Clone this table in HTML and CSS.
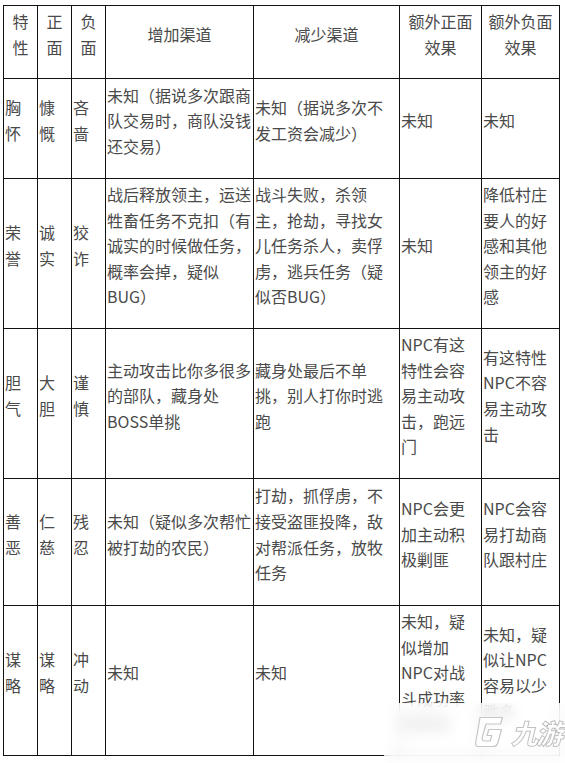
FILE: index.html
```html
<!DOCTYPE html>
<html lang="zh-CN">
<head>
<meta charset="utf-8">
<title>特性表</title>
<link rel="stylesheet" href="styles.css">
</head>
<body>
<div class="page">
  <div class="sheet">
    <div class="cell head">特<br>性</div>
    <div class="cell head">正<br>面</div>
    <div class="cell head">负<br>面</div>
    <div class="cell head">增加渠道</div>
    <div class="cell head">减少渠道</div>
    <div class="cell head">额外正面<br>效果</div>
    <div class="cell head">额外负面<br>效果</div>

    <div class="cell">胸<br>怀</div>
    <div class="cell">慷<br>慨</div>
    <div class="cell">吝<br>啬</div>
    <div class="cell">未知（据说多次跟商<br>队交易时，商队没钱<br>还交易）</div>
    <div class="cell">未知（据说多次不<br>发工资会减少）</div>
    <div class="cell">未知</div>
    <div class="cell">未知</div>

    <div class="cell">荣<br>誉</div>
    <div class="cell">诚<br>实</div>
    <div class="cell">狡<br>诈</div>
    <div class="cell">战后释放领主，运送<br>牲畜任务不克扣（有<br>诚实的时候做任务，<br>概率会掉，疑似<br>BUG）</div>
    <div class="cell">战斗失败，杀领<br>主，抢劫，寻找女<br>儿任务杀人，卖俘<br>虏，逃兵任务（疑<br>似否BUG）</div>
    <div class="cell">未知</div>
    <div class="cell">降低村庄<br>要人的好<br>感和其他<br>领主的好<br>感</div>

    <div class="cell">胆<br>气</div>
    <div class="cell">大<br>胆</div>
    <div class="cell">谨<br>慎</div>
    <div class="cell">主动攻击比你多很多<br>的部队，藏身处<br>BOSS单挑</div>
    <div class="cell">藏身处最后不单<br>挑，别人打你时逃<br>跑</div>
    <div class="cell">NPC有这<br>特性会容<br>易主动攻<br>击，跑远<br>门</div>
    <div class="cell">有这特性<br>NPC不容<br>易主动攻<br>击</div>

    <div class="cell">善<br>恶</div>
    <div class="cell">仁<br>慈</div>
    <div class="cell">残<br>忍</div>
    <div class="cell">未知（疑似多次帮忙<br>被打劫的农民）</div>
    <div class="cell">打劫，抓俘虏，不<br>接受盗匪投降，敌<br>对帮派任务，放牧<br>任务</div>
    <div class="cell">NPC会更<br>加主动积<br>极剿匪</div>
    <div class="cell">NPC会容<br>易打劫商<br>队跟村庄</div>

    <div class="cell">谋<br>略</div>
    <div class="cell">谋<br>略</div>
    <div class="cell">冲<br>动</div>
    <div class="cell">未知</div>
    <div class="cell">未知</div>
    <div class="cell">未知，疑<br>似增加<br>NPC对战<br>斗成功率<br>的影响</div>
    <div class="cell">未知，疑<br>似让NPC<br>容易以少<br>胜多</div>
  </div>

  <div class="watermark">
    <svg class="wm-logo" width="30" height="32" viewBox="0 0 30 32">
      <path d="M6 1.5 L28.5 1.5 L26.5 8 L12 8 L8.2 21.5 Q7.4 25 10.8 25 L16.2 25 L17.8 19.5 L13 19.5 L14.8 13.5 L27.5 13.5 L23.8 27 Q22.8 30.5 19 30.5 L5 30.5 Q0.6 30.5 1.8 26 Z" fill="#fff" stroke="#c6c6c6" stroke-width="1.2" stroke-linejoin="round"/>
    </svg>
    <span class="wm-text">九游</span>
  </div>
</div>
</body>
</html>
```

FILE: styles.css
```css
html, body {
  margin: 0;
  padding: 0;
  background: #fff;
}

.page {
  position: relative;
  width: 565px;
  height: 763px;
  padding: 5px 0 0 3px;
  box-sizing: border-box;
  overflow: hidden;
}

.sheet {
  display: grid;
  grid-template-columns: 33px 33px 33px 147px 145px 81px 77px;
  grid-template-rows: 72px 99px 149px 149px 126px 149px;
  gap: 1px;
  padding: 1px;
  width: max-content;
  background: #111;
}

.cell {
  background: #fff;
  display: flex;
  align-items: center;
  padding: 0 0 15px 1px;
  box-sizing: border-box;
  font-family: "Noto Sans CJK SC", "Noto Sans", sans-serif;
  font-size: 16px;
  line-height: 25.6px;
  color: #4a4a4a;
  white-space: nowrap;
  overflow: visible;
}

.head {
  justify-content: center;
  text-align: center;
  padding: 0 0 15px 0;
}

.watermark {
  position: absolute;
  left: 384px;
  top: 703px;
  width: 181px;
  height: 60px;
  display: flex;
  align-items: center;
  gap: 7px;
  padding: 0 0 2px 90px;
  box-sizing: border-box;
  background: rgba(255, 255, 255, 0.74);
  -webkit-backdrop-filter: blur(7px);
  backdrop-filter: blur(7px);
}

.wm-logo {
  display: block;
  flex: none;
}

.wm-text {
  font-family: "Noto Sans CJK SC", sans-serif;
  font-size: 27px;
  font-weight: 900;
  font-style: italic;
  line-height: 1;
  color: #fff;
  -webkit-text-stroke: 1px #c2c2c2;
  letter-spacing: -2px;
}
```
